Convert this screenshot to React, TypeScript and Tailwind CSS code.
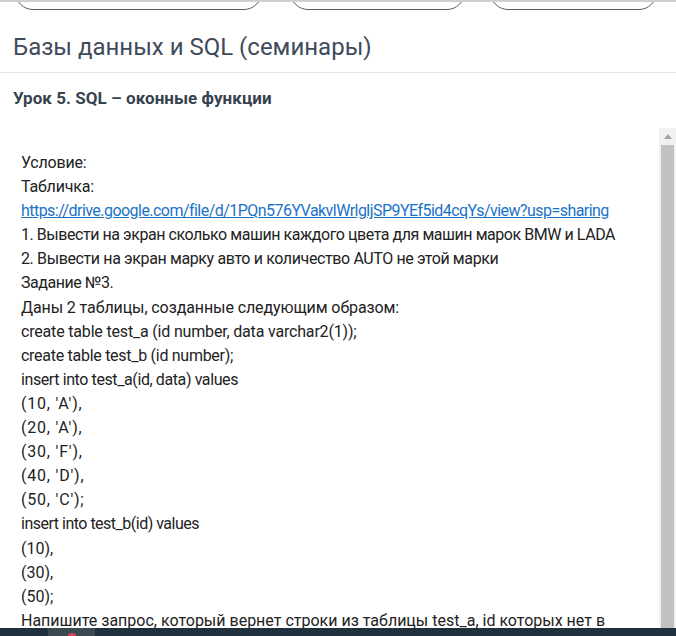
import React from "react";

type Line = { t: string; c: string; link?: boolean };

const lines: Line[] = [
  { t: "Условие:", c: "tracking-[-0.2px]" },
  { t: "Табличка:", c: "tracking-[-0.2px]" },
  {
    t: "https://drive.google.com/file/d/1PQn576YVakvlWrlgljSP9YEf5id4cqYs/view?usp=sharing",
    c: "tracking-[-0.54px]",
    link: true,
  },
  { t: "1. Вывести на экран сколько машин каждого цвета для машин марок BMW и LADA", c: "tracking-[-0.45px]" },
  { t: "2. Вывести на экран марку авто и количество AUTO не этой марки", c: "tracking-[-0.38px]" },
  { t: "Задание №3.", c: "tracking-[-0.45px]" },
  { t: "Даны 2 таблицы, созданные следующим образом:", c: "tracking-[-0.1px]" },
  { t: "create table test_a (id number, data varchar2(1));", c: "tracking-[-0.18px]" },
  { t: "create table test_b (id number);", c: "tracking-[-0.28px]" },
  { t: "insert into test_a(id, data) values", c: "tracking-[-0.4px]" },
  { t: "(10, 'A'),", c: "tracking-[0.8px]" },
  { t: "(20, 'A'),", c: "tracking-[0.8px]" },
  { t: "(30, 'F'),", c: "tracking-[0.8px]" },
  { t: "(40, 'D'),", c: "tracking-[0.8px]" },
  { t: "(50, 'C');", c: "tracking-[0.8px]" },
  { t: "insert into test_b(id) values", c: "tracking-[-0.5px]" },
  { t: "(10),", c: "tracking-[0px]" },
  { t: "(30),", c: "tracking-[0px]" },
  { t: "(50);", c: "tracking-[0px]" },
  { t: "Напишите запрос, который вернет строки из таблицы test_a, id которых нет в", c: "tracking-[0px]" },
];

export default function App() {
  return (
    <div
      className="w-[676px] h-[636px] overflow-hidden bg-white flex flex-col border-t-2 border-[#cfcfcf]"
      style={{ fontFamily: "Roboto, 'Noto Sans', sans-serif" }}
    >
      <div className="h-[8px] shrink-0 relative">
        <div className="flex">
          <div className="ml-[15px] w-[247px] h-[40px] -mt-[32px] rounded-b-[18px] border border-[#555b63] bg-white" />
          <div className="ml-[28px] w-[175px] h-[40px] -mt-[32px] rounded-b-[18px] border border-[#555b63] bg-white" />
          <div className="ml-[25px] w-[167px] h-[40px] -mt-[32px] rounded-b-[18px] border border-[#555b63] bg-white" />
        </div>
      </div>
      <div className="px-[13px] pt-[23px] pb-[11px] border-b border-[#e6e6e6] shrink-0">
        <h1 className="text-[24px] leading-[28px] text-[#3e4b5b] font-normal">
          Базы данных и SQL (семинары)
        </h1>
      </div>
      <div className="px-[13px] pt-[14px] h-[55px] shrink-0">
        <h2 className="text-[17px] leading-[22px] font-bold text-[#37424f] tracking-[0.05px]">
          Урок 5. SQL – оконные функции
        </h2>
      </div>
      <div className="flex-1 flex min-h-0">
        <div className="flex-1 pl-[21px] pt-[23px] text-[16px] leading-[24.1px] text-[#222222] overflow-hidden">
          {lines.map((l, i) =>
            l.link ? (
              <div key={i} className={"whitespace-nowrap " + l.c}>
                <a className="text-[#1a73c9] underline">{l.t}</a>
              </div>
            ) : (
              <div key={i} className={"whitespace-nowrap " + l.c}>
                {l.t}
              </div>
            )
          )}
        </div>
        <div className="w-[17px] bg-[#f1f1f1] flex flex-col items-center shrink-0">
          <div className="h-[17px] w-full flex items-center justify-center">
            <svg width="8" height="5" viewBox="0 0 8 5">
              <polygon points="4,0 8,5 0,5" fill="#a3a3a3" />
            </svg>
          </div>
          <div className="flex-1 w-[13px] bg-[#c1c1c1]" />
        </div>
      </div>
      <div className="h-[8px] bg-[#1f313d] shrink-0 flex">
        <div className="ml-[48px] w-[47px] h-full bg-[#3b4a50] flex justify-center items-end">
          <div className="w-[8px] h-[3px] rounded-t-full bg-[#d6455a]" />
        </div>
      </div>
    </div>
  );
}
